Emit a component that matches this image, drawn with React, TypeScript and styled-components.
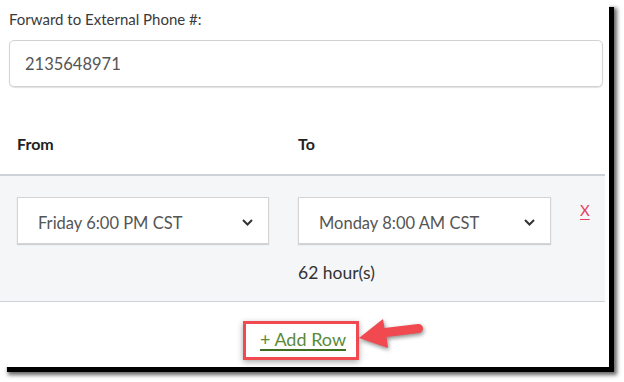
import styled, { createGlobalStyle } from "styled-components";

const GlobalStyle = createGlobalStyle`
  html, body {
    margin: 0;
    padding: 0;
    background: #fff;
  }
  body {
    min-height: 382px;
    font-family: Lato, "Open Sans", sans-serif;
  }
`;

const Frame = styled.div`
  position: relative;
  width: 609px;
  height: 367px;
  background: #fff;
  box-shadow: 6px 6px 0 -1px #000, 8px 8px 4px rgba(0, 0, 0, 0.6);
`;

const Content = styled.div`
  width: 605px;
  display: flex;
  flex-direction: column;
`;

const PhoneSection = styled.div`
  padding: 9px 2px 0 9px;
`;

const Label = styled.div`
  font-size: 15px;
  line-height: 20px;
  color: #3a3a3a;
  margin-bottom: 11px;
`;

const PhoneInput = styled.div`
  height: 45px;
  border: 1px solid #d2d2d2;
  border-radius: 5px;
  box-shadow: 0 1px 1px rgba(0, 0, 0, 0.12);
  display: flex;
  align-items: center;
  padding-left: 15px;
  font-size: 16.5px;
  color: #555;
`;

const Columns = styled.div`
  display: grid;
  grid-template-columns: 252px 253px 1fr;
  column-gap: 29px;
  padding-left: 17px;
`;

const HeaderRow = styled(Columns)`
  padding-top: 46px;
  padding-bottom: 20px;
  border-bottom: 2px solid #cdd1d8;
`;

const HeadCell = styled.div`
  font-size: 16px;
  line-height: 21px;
  font-weight: 700;
  color: #222;
`;

const TimeRow = styled(Columns)`
  background: #f5f6f8;
  padding-top: 21px;
  height: 104px;
  border-bottom: 1px solid #cdd1d8;
  align-content: start;
`;

const Select = styled.div`
  height: 41px;
  border: 1px solid #d4d4d4;
  background: #fff;
  box-shadow: 0 1px 1px rgba(0, 0, 0, 0.15);
  display: flex;
  align-items: center;
  justify-content: space-between;
  padding: 4px 15px 0 20px;
  font-size: 16.5px;
  color: #555;
`;

const Chevron = () => (
  <svg width="11" height="7" viewBox="0 0 11 7">
    <path d="M1 1l4.5 4.5L10 1" fill="none" stroke="#333" strokeWidth="2" />
  </svg>
);

const Remove = styled.a`
  font-size: 15px;
  color: #e8405a;
  text-decoration: underline;
  text-underline-offset: 3px;
  margin-top: 4px;
  align-self: start;
`;

const Hours = styled.div`
  grid-column: 2;
  margin-top: 18px;
  font-size: 17.5px;
  color: #333;
`;

const Footer = styled.div`
  display: flex;
  justify-content: center;
  padding-top: 19px;
  padding-right: 3px;
`;

const Highlight = styled.div`
  position: relative;
  border: 3px solid #f04a50;
  box-shadow: 0 2px 6px rgba(0, 0, 0, 0.35);
  padding: 4px 10px 7px 14px;
`;

const AddRow = styled.a`
  font-size: 18px;
  color: #5a8a3a;
  text-decoration: underline;
  text-decoration-color: #3f6f22;
  text-decoration-thickness: 2px;
  text-underline-offset: 3px;
`;

const Arrow = styled.svg`
  position: absolute;
  left: 113px;
  top: -8px;
  overflow: visible;
  filter: drop-shadow(1px 2px 2px rgba(0, 0, 0, 0.45));
`;

export default function App() {
  return (
    <>
      <GlobalStyle />
      <Frame>
        <Content>
          <PhoneSection>
            <Label>Forward to External Phone #:</Label>
            <PhoneInput>2135648971</PhoneInput>
          </PhoneSection>
          <HeaderRow>
            <HeadCell>From</HeadCell>
            <HeadCell>To</HeadCell>
          </HeaderRow>
          <TimeRow>
            <Select>
              Friday 6:00 PM CST
              <Chevron />
            </Select>
            <Select>
              Monday 8:00 AM CST
              <Chevron />
            </Select>
            <Remove>X</Remove>
            <Hours>62 hour(s)</Hours>
          </TimeRow>
          <Footer>
            <Highlight>
              <AddRow>+ Add Row</AddRow>
              <Arrow width="66" height="34" viewBox="0 0 66 34">
                <path
                  d="M0 22 L24 3 L25.5 12 L59 8 A4.5 4.5 0 0 1 60 17 L27.5 21 L29 32 Z"
                  fill="#f04a50"
                />
              </Arrow>
            </Highlight>
          </Footer>
        </Content>
      </Frame>
    </>
  );
}
